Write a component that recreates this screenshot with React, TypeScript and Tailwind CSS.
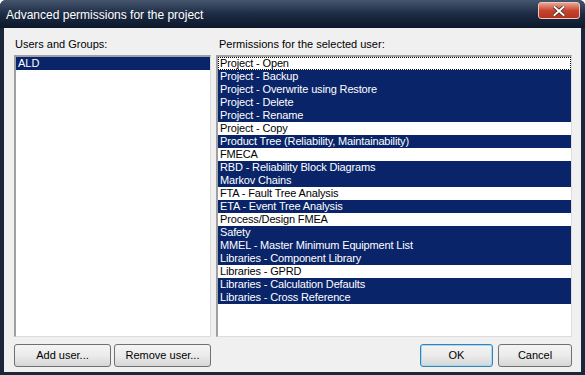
const users = ['ALD'];

const permissions: { label: string; selected: boolean }[] = [
  { label: 'Project - Open', selected: false },
  { label: 'Project - Backup', selected: true },
  { label: 'Project - Overwrite using Restore', selected: true },
  { label: 'Project - Delete', selected: true },
  { label: 'Project - Rename', selected: true },
  { label: 'Project - Copy', selected: false },
  { label: 'Product Tree (Reliability, Maintainability)', selected: true },
  { label: 'FMECA', selected: false },
  { label: 'RBD - Reliability Block Diagrams', selected: true },
  { label: 'Markov Chains', selected: true },
  { label: 'FTA - Fault Tree Analysis', selected: false },
  { label: 'ETA - Event Tree Analysis', selected: true },
  { label: 'Process/Design FMEA', selected: false },
  { label: 'Safety', selected: true },
  { label: 'MMEL - Master Minimum Equipment List', selected: true },
  { label: 'Libraries - Component Library', selected: true },
  { label: 'Libraries - GPRD', selected: false },
  { label: 'Libraries - Calculation Defaults', selected: true },
  { label: 'Libraries - Cross Reference', selected: true },
];

function Button({ label, primary = false, className = '' }: { label: string; primary?: boolean; className?: string }) {
  return (
    <button
      className={
        'h-[23px] rounded-[3px] border text-[11px] text-black bg-gradient-to-b from-[#f4f4f4] via-[#ebebeb] to-[#d6d6d6] ' +
        (primary ? 'border-[#3c7fb1] shadow-[inset_0_0_0_1px_#9fdcf5] ' : 'border-[#707070] ') +
        className
      }
    >
      {label}
    </button>
  );
}

export default function App() {
  return (
    <div
      className="w-[585px] h-[375px] flex flex-col bg-[#1b2739] rounded-t-[6px] overflow-hidden"
      style={{ fontFamily: '"Liberation Sans", Arial, sans-serif' }}
    >
      {/* title bar */}
      <div className="h-[28px] shrink-0 flex items-start justify-between bg-gradient-to-b from-[#46566e] via-[#1d2c44] to-[#0c172a] pl-[6px] pr-[5px]">
        <span className="text-white text-[12px] mt-[6px]">Advanced permissions for the project</span>
        <div className="mt-[2px] w-[42px] h-[17px] rounded-[3px] border border-[#e9c8bf] bg-gradient-to-b from-[#e7a393] via-[#c8432c] to-[#b33420] flex items-center justify-center">
          <svg width="12" height="10" viewBox="0 0 12 10">
            <path d="M1.5 1 L10.5 9 M10.5 1 L1.5 9" stroke="#3b2620" strokeWidth="3.4" strokeLinecap="square" />
            <path d="M1.5 1 L10.5 9 M10.5 1 L1.5 9" stroke="#ffffff" strokeWidth="2" strokeLinecap="square" />
          </svg>
        </div>
      </div>

      {/* body */}
      <div className="flex-1 mx-[4px] mb-[3px] bg-[#f0f0f0] flex flex-col pt-[10px] pl-[10px] pr-[9px] pb-[5px]">
        <div className="flex-1 flex gap-[5px] min-h-0">
          <div className="w-[197px] flex flex-col">
            <div className="text-[11px] leading-[13px] text-black h-[17px] pl-[1px]">Users and Groups:</div>
            <div className="flex-1 bg-white border-t-2 border-l-2 border-[#a0a0a0] border-r border-b border-r-[#dcdcdc] border-b-[#dcdcdc]">
              {users.map((u) => (
                <div key={u} className="h-[13px] leading-[13px] text-[11px] pl-[2px] bg-[#0a246a] text-white">
                  {u}
                </div>
              ))}
            </div>
          </div>
          <div className="flex-1 flex flex-col">
            <div className="text-[11px] leading-[13px] text-black h-[17px] pl-[3px]">Permissions for the selected user:</div>
            <div className="flex-1 bg-white border-t-2 border-l-2 border-[#a0a0a0] border-r border-b border-r-[#dcdcdc] border-b-[#dcdcdc]">
              {permissions.map((p, i) => (
                <div
                  key={p.label}
                  className={
                    'h-[13px] leading-[12px] text-[11px] tracking-[-0.15px] pl-[2px] whitespace-nowrap ' +
                    (p.selected ? 'bg-[#0a246a] text-white ' : 'text-black ') +
                    (i === 0 ? 'outline outline-1 outline-dotted outline-black -outline-offset-1' : '')
                  }
                >
                  {p.label}
                </div>
              ))}
            </div>
          </div>
        </div>

        {/* buttons */}
        <div className="flex items-center mt-[7px]">
          <Button label="Add user..." className="w-[97px]" />
          <Button label="Remove user..." className="w-[97px] ml-[3px]" />
          <div className="flex-1" />
          <Button label="OK" primary className="w-[73px]" />
          <Button label="Cancel" className="w-[74px] ml-[5px]" />
        </div>
      </div>
    </div>
  );
}
